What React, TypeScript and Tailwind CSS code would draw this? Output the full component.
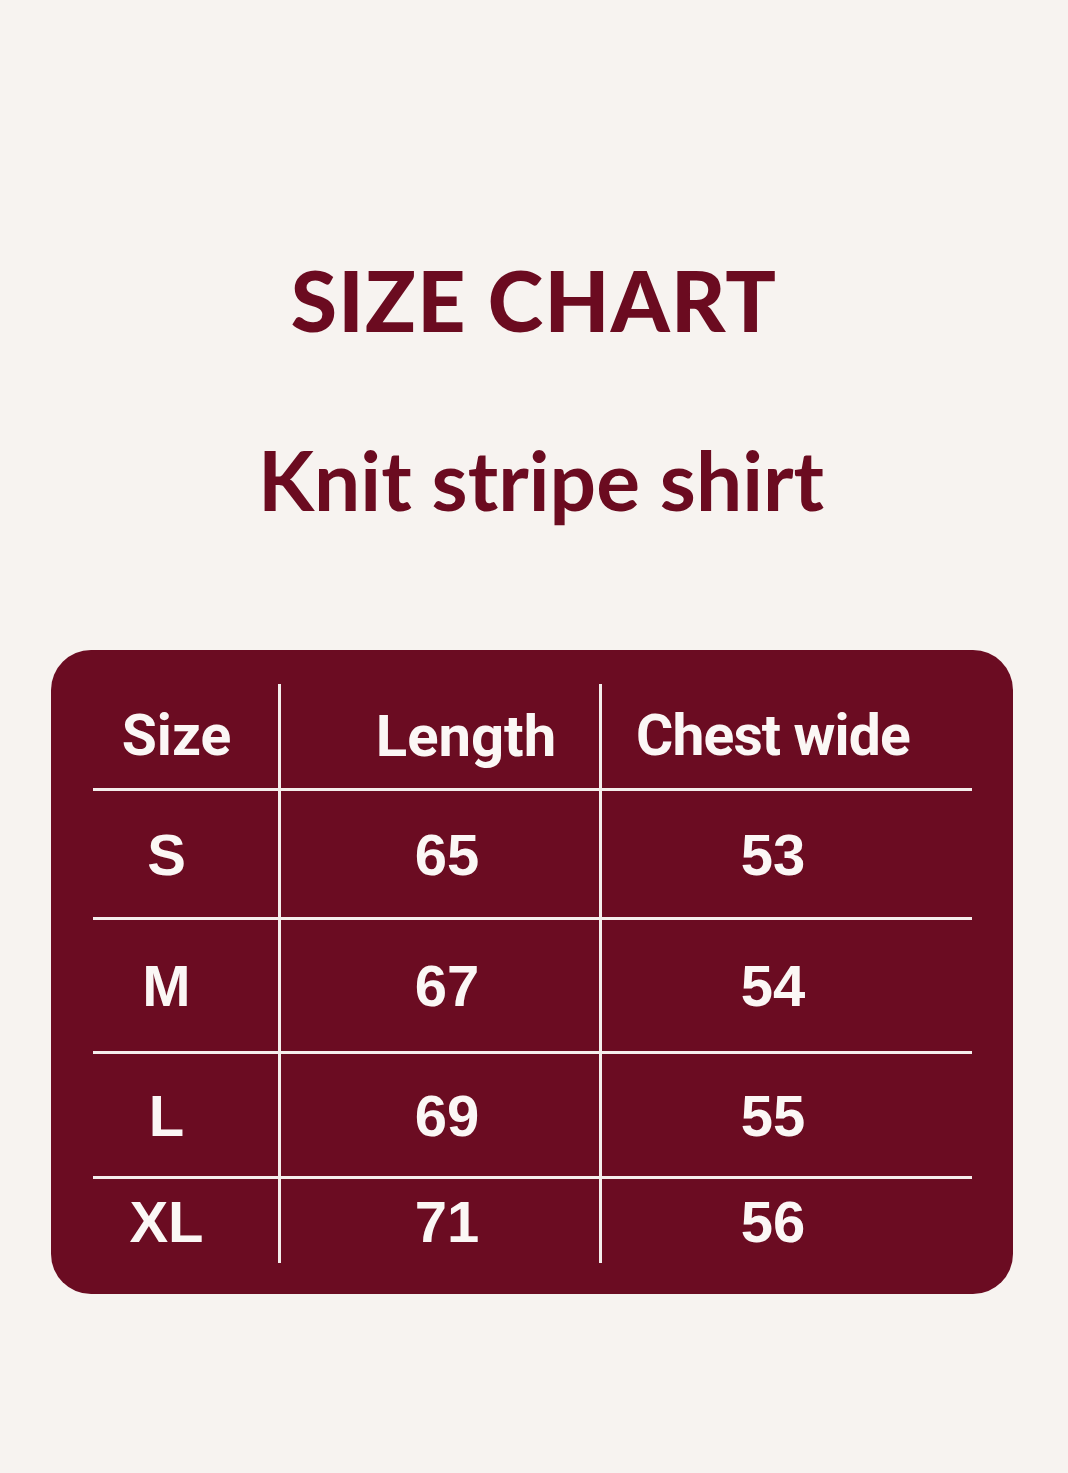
import React from 'react';

const ROWS = [
  { size: 'S', length: '65', chest: '53', h: 'h-[129px]' },
  { size: 'M', length: '67', chest: '54', h: 'h-[134px]' },
  { size: 'L', length: '69', chest: '55', h: 'h-[125px]' },
  { size: 'XL', length: '71', chest: '56', h: 'h-[84px]' },
];

const App: React.FC = () => {
  return (
    <div className="w-[1068px] h-[1473px] bg-[#f7f3f0] flex flex-col items-center font-['Lato',sans-serif]">
      <h1 className="mt-[258px] ml-[0px] text-[84px] leading-none font-black tracking-[0.015em] text-[#6b0b20]">
        SIZE CHART
      </h1>
      <h2 className="mt-[96px] ml-[14px] text-[82px] leading-none font-bold text-[#6b0b20]">
        Knit stripe shirt
      </h2>

      <section className="mt-[130px] self-start ml-[51px] w-[962px] bg-[#6b0c22] rounded-[40px] pl-[42px] pt-[34px] pb-[31px]">
        <div className="grid grid-cols-[188px_321px_370px] text-[#fbf7f5]">
          {/* header */}
          <div className="h-[107px] border-r-[3px] border-b-[3px] border-[#f4eeec] flex items-center justify-center pr-[18px] font-['Roboto',sans-serif] font-bold text-[57px]">
            Size
          </div>
          <div className="h-[107px] border-r-[3px] border-b-[3px] border-[#f4eeec] flex items-center justify-center pl-[52px] font-['Roboto',sans-serif] font-bold text-[58px]">
            Length
          </div>
          <div className="h-[107px] border-b-[3px] border-[#f4eeec] flex items-center justify-center pr-[28px] font-['Roboto',sans-serif] font-bold text-[57px] tracking-[-0.015em]">
            Chest wide
          </div>

          {ROWS.map((r, i) => {
            const last = i === ROWS.length - 1;
            return (
              <React.Fragment key={r.size}>
                <div className={`${r.h} border-r-[3px] ${last ? '' : 'border-b-[3px]'} border-[#f4eeec] flex items-center justify-center pr-[38px] font-['Liberation_Sans',sans-serif] font-bold text-[58px]`}>
                  {r.size}
                </div>
                <div className={`${r.h} border-r-[3px] ${last ? '' : 'border-b-[3px]'} border-[#f4eeec] flex items-center justify-center pl-[14px] font-['Liberation_Sans',sans-serif] font-bold text-[58px]`}>
                  {r.length}
                </div>
                <div className={`${r.h} ${last ? '' : 'border-b-[3px]'} border-[#f4eeec] flex items-center justify-center pr-[28px] font-['Liberation_Sans',sans-serif] font-bold text-[58px]`}>
                  {r.chest}
                </div>
              </React.Fragment>
            );
          })}
        </div>
      </section>
    </div>
  );
};

export default App;
